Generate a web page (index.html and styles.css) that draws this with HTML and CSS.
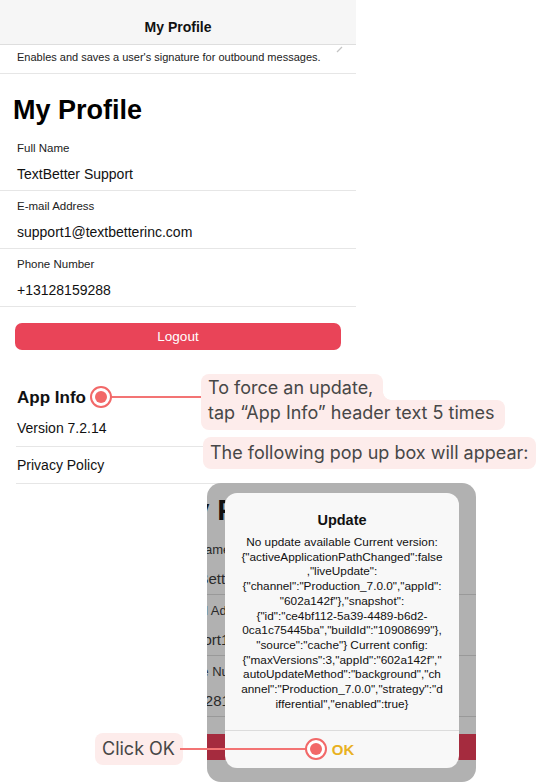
FILE: index.html
```html
<!DOCTYPE html>
<html lang="en">
<head>
<meta charset="utf-8">
<title>My Profile</title>
<link rel="stylesheet" href="styles.css">
</head>
<body>
<div class="canvas">
  <div class="app">
    <header class="nav">My Profile</header>
    <div class="desc">Enables and saves a user's signature for outbound messages.
      <svg class="chev" width="8" height="10" viewBox="0 0 8 10"><path d="M1 9 L6 4" stroke="#c4c4c4" stroke-width="1.2" fill="none"/></svg>
    </div>
    <h1 class="title">My Profile</h1>
    <div class="field"><div class="label">Full Name</div><div class="value">TextBetter Support</div></div>
    <div class="field"><div class="label">E-mail Address</div><div class="value">support1@textbetterinc.com</div></div>
    <div class="field"><div class="label">Phone Number</div><div class="value">+13128159288</div></div>
    <div class="btn-wrap"><div class="logout">Logout</div></div>
    <section class="info">
      <h2 class="info-title">App Info</h2>
      <div class="info-row">Version 7.2.14</div>
      <div class="info-row">Privacy Policy</div>
    </section>
  </div>

  <div class="line line1"></div>
  <div class="marker marker1"></div>

  <div class="callout1">
    <span class="c1a">To force an update,</span>
    <span class="c1b">tap “App Info” header text 5 times</span>
  </div>
  <div class="callout2">The following pop up box will appear:</div>

  <div class="frame">
    <div class="ghost">
      <div class="g-title">My Profile</div>
      <div class="g-field"><div class="g-label">Full Name</div><div class="g-value">TextBetter Support</div></div>
      <div class="g-field"><div class="g-label">E-mail Address</div><div class="g-value">support1@textbetterinc.com</div></div>
      <div class="g-field"><div class="g-label">Phone Number</div><div class="g-value">+13128159288</div></div>
      <div class="g-btn"></div>
    </div>
    <div class="alert">
      <div class="alert-title">Update</div>
      <div class="alert-msg">No update available Current version:<br>{"activeApplicationPathChanged":false<br>,"liveUpdate":<br>{"channel":"Production_7.0.0","appId":<br>"602a142f"},"snapshot":<br>{"id":"ce4bf112-5a39-4489-b6d2-<br>0ca1c75445ba","buildId":"10908699"},<br>"source":"cache"} Current config:<br>{"maxVersions":3,"appId":"602a142f","<br>autoUpdateMethod":"background","ch<br>annel":"Production_7.0.0","strategy":"d<br>ifferential","enabled":true}</div>
      <div class="alert-btn">OK</div>
    </div>
  </div>

  <div class="callout3">Click OK</div>
  <div class="line line2"></div>
  <div class="marker marker2"></div>
</div>
</body>
</html>
```

FILE: styles.css
```css
* { box-sizing: border-box; }
html, body { margin: 0; padding: 0; background: #ffffff; }
body { font-family: "Liberation Sans", Arial, sans-serif; color: #111; }

.canvas { position: relative; width: 546px; height: 784px; overflow: hidden; }

.app { width: 356px; }

.nav {
  height: 45px;
  background: #f6f6f6;
  border-bottom: 1px solid #dedede;
  font-size: 14px;
  font-weight: bold;
  text-align: center;
  line-height: 20px;
  padding-top: 17px;
  color: #111;
}

.desc {
  position: relative;
  font-size: 11px;
  line-height: 16px;
  padding: 4px 17px 8px;
  border-bottom: 1px solid #e6e6e6;
  color: #222;
}
.chev { position: absolute; right: 12px; top: -2px; }

.title {
  margin: 20px 0 7px 13px;
  font-size: 27px;
  line-height: 32px;
  font-weight: bold;
  color: #000;
}

.field {
  padding: 7px 17px 6px;
  border-bottom: 1px solid #e6e6e6;
}
.label { font-size: 11.5px; line-height: 16px; color: #222; }
.value { font-size: 14px; line-height: 20px; margin-top: 8px; color: #111; }

.btn-wrap { padding: 16px 15px 0; }
.logout {
  width: 326px;
  height: 27px;
  border-radius: 7px;
  background: #e94458;
  color: #fff;
  font-size: 13.5px;
  line-height: 27px;
  text-align: center;
}

.info { margin-top: 37px; }
.info-title {
  margin: 0 0 1px 17px;
  font-size: 17px;
  line-height: 22px;
  font-weight: bold;
  color: #111;
}
.info-row {
  margin-left: 16px;
  padding: 8px 0 8px 1px;
  font-size: 14px;
  line-height: 20px;
  border-bottom: 1px solid #e6e6e6;
  color: #111;
}

/* annotations */
.line { position: absolute; height: 2px; background: #f37474; }
.line1 { left: 110px; top: 396px; width: 92px; }
.line2 { left: 180px; top: 748px; width: 128px; }

.marker {
  position: absolute;
  width: 22px; height: 22px;
  border-radius: 50%;
  border: 2px solid #f26868;
  background: #fff;
}
.marker::after {
  content: "";
  position: absolute;
  left: 3px; top: 3px;
  width: 12px; height: 12px;
  border-radius: 50%;
  background: #f26868;
}
.marker1 { left: 90px; top: 386px; }
.marker2 { left: 305px; top: 738px; }

.callout1, .callout2, .callout3 {
  font-family: "Inter", "Liberation Sans", sans-serif;
  font-size: 18px;
  color: #474747;
}
.callout1 { position: absolute; left: 201px; top: 374px; }
.c1a {
  position: relative;
  display: block;
  width: fit-content;
  background: #fdeceb;
  padding: 2px 10px 0 7px;
  line-height: 24px;
  border-radius: 8px 8px 0 0;
}
.c1a::after {
  content: "";
  position: absolute;
  left: 100%; bottom: 0;
  width: 8px; height: 8px;
  background: radial-gradient(circle at 100% 0, transparent 7.5px, #fdeceb 8px);
}
.c1b {
  display: block;
  width: fit-content;
  background: #fdeceb;
  padding: 0 10px 5px 7px;
  line-height: 25px;
  border-radius: 0 8px 8px 8px;
}
.callout2 {
  position: absolute;
  left: 203px; top: 437px;
  height: 32px;
  line-height: 32px;
  padding: 0 8px 0 7px;
  background: #fdeceb;
  border-radius: 8px;
}
.callout3 {
  position: absolute;
  left: 95px; top: 733px;
  height: 32px;
  line-height: 32px;
  padding: 0 8px 0 7px;
  background: #fdeceb;
  border-radius: 8px;
}

/* popup screenshot */
.frame {
  position: absolute;
  left: 207px; top: 483px;
  width: 269px; height: 299px;
  border-radius: 14px;
  background: #b1b1b1;
  overflow: hidden;
}
.ghost { margin-left: -36px; color: #2a2a2a; }
.g-title {
  margin: 10px 0 7px -2px;
  width: 56px;
  overflow: hidden;
  font-size: 29px;
  line-height: 34px;
  font-weight: bold;
  color: #111;
  white-space: nowrap;
}
.g-field {
  padding: 7px 0 5px 20px;
  margin-left: -20px;
  border-bottom: 1px solid #999;
}
.g-label, .g-value {
  width: 54px;
  overflow: hidden;
  white-space: nowrap;
}
.g-label { font-size: 13px; line-height: 17px; }
.g-value { font-size: 15px; line-height: 21px; margin-top: 10px; }
.g-btn {
  margin-top: 17px;
  height: 26px;
  background: #a52b3e;
}

.alert {
  position: absolute;
  left: 18px; top: 10px;
  width: 234px; height: 275px;
  background: #f8f8f8;
  border-radius: 12px;
  text-align: center;
  display: flex;
  flex-direction: column;
}
.alert-title {
  padding-top: 17px;
  font-size: 14.5px;
  line-height: 20px;
  font-weight: bold;
  color: #111;
}
.alert-msg {
  margin-top: 5px;
  font-size: 11.8px;
  line-height: 14.7px;
  color: #111;
  white-space: nowrap;
  flex: 1;
}
.alert-btn {
  height: 38px;
  border-top: 1px solid #dcdcdc;
  line-height: 37px;
  font-size: 15px;
  font-weight: bold;
  color: #e9b11f;
  padding-left: 2px;
}
```
